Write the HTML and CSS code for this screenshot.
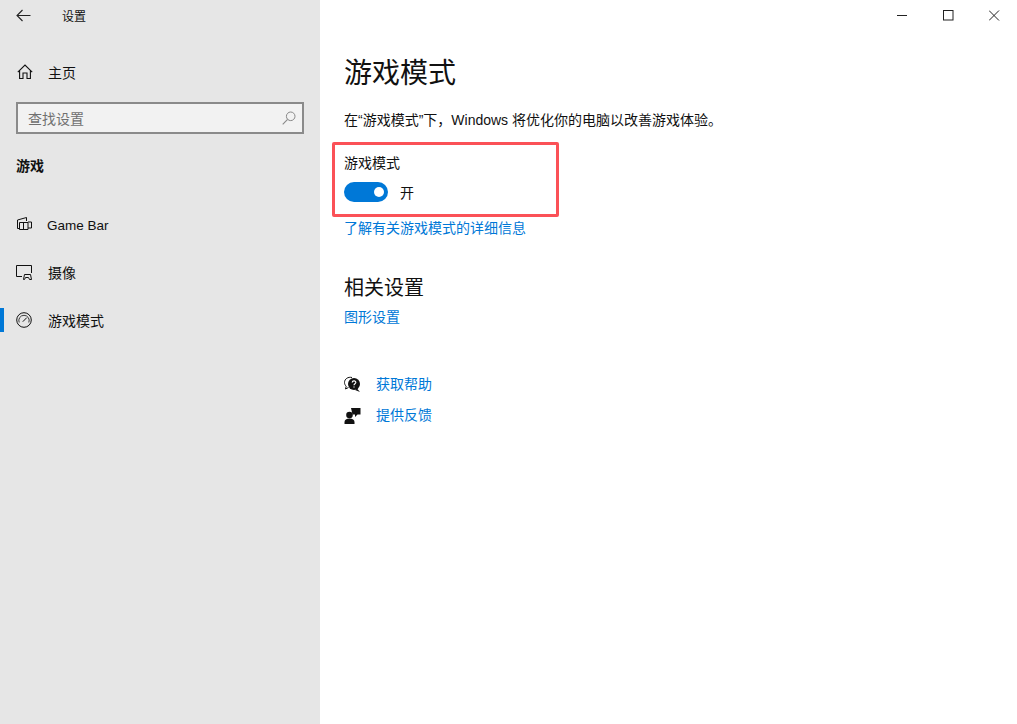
FILE: index.html
```html
<!DOCTYPE html>
<html lang="zh-CN">
<head>
<meta charset="utf-8">
<title>设置</title>
<link rel="stylesheet" href="styles.css">
</head>
<body>
<div class="app">
  <aside class="sidebar">
    <div class="titlebar">
      <svg class="back" width="16" height="14" viewBox="0 0 16 14"><path d="M6.500 1 1 6.500 6.500 12M1 6.500H14.500" fill="none" stroke="#222" stroke-width="1.100"/></svg>
      <span class="apptitle">设置</span>
    </div>
    <a class="home">
      <svg class="ico" width="16" height="16" viewBox="0 0 16 16"><path d="M.8 8.200 8 1l7.200 7.200M2.600 6.600V14.500H6V9h4v5.500h3.400V6.600" fill="none" stroke="#111" stroke-width="1.100"/></svg>
      <span>主页</span>
    </a>
    <div class="search">
      <span>查找设置</span>
      <svg width="14" height="14" viewBox="0 0 14 14"><circle cx="8.700" cy="5.300" r="4.300" fill="none" stroke="#888" stroke-width="1"/><path d="M5.600 8.400.7 13.300" stroke="#888" stroke-width="1.100"/></svg>
    </div>
    <div class="group">游戏</div>
    <nav class="nav">
      <a class="item">
        <svg class="ico" width="16" height="16" viewBox="0 0 16 16"><g fill="none" stroke="#111" stroke-width="1"><path d="M10.500 5V1.500L1.500 4v8.500h2"/><path d="M3.500 6.500h8.500v7H3.500z"/><path d="M7.500 6.500v7"/><path d="M12 6h3.500v6H12"/></g></svg>
        <span class="latin">Game Bar</span>
      </a>
      <a class="item">
        <svg class="ico" width="16" height="16" viewBox="0 0 16 16"><g fill="none" stroke="#111" stroke-width="1"><path d="M6 12.500H.5V1.500h15V9"/><path d="M2.500 3.500v.01M2.500 6v.01M2.500 8.500v.01M13.500 3.500v.01M13.500 6v.01" stroke-width="1.400"/><path d="M7.500 15.500 8.500 10.500h6l1 5h-2l-1-2h-3l-1 2z"/></g></svg>
        <span>摄像</span>
      </a>
      <a class="item current">
        <svg class="ico" width="16" height="16" viewBox="0 0 16 16"><g fill="none" stroke="#111"><circle cx="8" cy="8" r="7.300"/><path d="M3.200 10.500A5.200 5.200 0 1 1 12.800 10.500" stroke-width=".8"/><path d="M6.800 9.700 10.800 5.600"/></g></svg>
        <span>游戏模式</span>
      </a>
    </nav>
  </aside>
  <main class="content">
    <div class="winctl">
      <svg width="11" height="11" viewBox="0 0 11 11"><path d="M0 5.500h10" stroke="#222" stroke-width="1"/></svg>
      <svg width="11" height="11" viewBox="0 0 11 11"><rect x=".5" y=".5" width="9.500" height="9.500" fill="none" stroke="#222"/></svg>
      <svg width="11" height="11" viewBox="0 0 11 11"><path d="M0 .5l10 10M10 .5l-10 10" stroke="#222" stroke-width="1"/></svg>
    </div>
    <h1>游戏模式</h1>
    <p class="desc">在“游戏模式”下，Windows 将优化你的电脑以改善游戏体验。</p>
    <div class="highlight">
      <div class="label">游戏模式</div>
      <div class="toggle-row">
        <span class="toggle"><span class="knob"></span></span>
        <span>开</span>
      </div>
    </div>
    <a class="link learn">了解有关游戏模式的详细信息</a>
    <h2>相关设置</h2>
    <a class="link gfx">图形设置</a>
    <div class="help">
      <a class="help-row">
        <svg width="17" height="17" viewBox="0 0 17 17"><path d="M8 1.500C4 .500.500 3 .5 6.500c0 1.500.700 2.800 1.700 3.700L1.500 13l3-1.500" fill="none" stroke="#111"/><circle cx="10" cy="8" r="6" fill="#111"/><path d="M13 12.500l3 3.500-5-2z" fill="#111"/><path d="M8.200 6.500c.2-2.300 3.800-2 3.600 0-.1 1.300-1.800 1.300-1.800 2.800M10 10.600v1" stroke="#fff" stroke-width="1.200" fill="none"/></svg>
        <span>获取帮助</span>
      </a>
      <a class="help-row">
        <svg width="17" height="17" viewBox="0 0 17 17"><circle cx="5.500" cy="8" r="3.300" fill="#111"/><path d="M.5 17v-2c0-2 2-3.500 5-3.500s5 1.500 5 3.500v2z" fill="#111"/><path d="M7 1h9.500v6.500h-3L11 10V7.500H8.500z" fill="#111"/></svg>
        <span>提供反馈</span>
      </a>
    </div>
  </main>
</div>
</body>
</html>
```
FILE: styles.css
```css
* { box-sizing: border-box; }
html, body { margin: 0; height: 100%; overflow: hidden; }
body {
  font-family: "Liberation Sans", "Noto Sans CJK SC", sans-serif;
  font-size: 14px;
  color: #111;
  background: #fff;
}
.app { display: flex; height: 724px; }
.sidebar {
  width: 320px;
  flex: none;
  background: #e6e6e6;
  display: flex;
  flex-direction: column;
}
.titlebar {
  height: 32px;
  display: flex;
  align-items: center;
  padding-left: 16px;
}
.back { margin-right: 30px; }
.apptitle { font-size: 12px; line-height: 30px; padding-top: 2px; }
.home {
  display: flex;
  align-items: center;
  height: 48px;
  margin-top: 16px;
  padding-left: 17px;
}
.home .ico { margin-right: 15px; }
.search {
  margin: 6px 16px 0 16px;
  height: 32px;
  border: 2px solid #8a8a8a;
  background: #f2f2f2;
  display: flex;
  align-items: center;
  justify-content: space-between;
  padding: 0 6px 0 10px;
  color: #707070;
}
.group {
  margin-top: 22px;
  padding-left: 16px;
  font-weight: 700;
  line-height: 20px;
}
.nav { margin-top: 24px; display: flex; flex-direction: column; }
.item {
  position: relative;
  display: flex;
  align-items: center;
  height: 48px;
  padding-left: 16px;
}
.item .ico { margin-right: 16px; }
.item .latin {
  margin-left: -1px;
  padding-top: 2px;
  font-size: 13.500px;
}
.current::before {
  content: "";
  position: absolute;
  left: 0;
  top: 12px;
  width: 4px;
  height: 24px;
  background: #0078d7;
}
.content {
  flex: 1;
  padding-left: 24px;
  position: relative;
}
.winctl {
  position: absolute;
  top: 10px;
  right: 17px;
  display: flex;
  gap: 35px;
}
h1 {
  margin: 52px 0 0;
  font-size: 28px;
  font-weight: 400;
  line-height: 44px;
}
.desc { margin: 13px 0 0; line-height: 22px; }
.highlight {
  margin: 11px 0 0 -12px;
  width: 227px;
  height: 75px;
  border: 3px solid #fb5157;
  border-radius: 2px;
  padding: 8px 0 0 9px;
}
.label { line-height: 20px; }
.toggle-row {
  display: flex;
  align-items: center;
  gap: 12px;
  margin-top: 9px;
  height: 20px;
}
.toggle {
  width: 44px;
  height: 20px;
  border-radius: 10px;
  background: #0078d7;
  display: flex;
  align-items: center;
  justify-content: flex-end;
  padding-right: 4px;
}
.knob { width: 10px; height: 10px; border-radius: 50%; background: #fff; }
.link { display: block; color: #0078d7; line-height: 20px; }
.learn { margin-top: 1px; }
h2 {
  margin: 35px 0 0;
  font-size: 20px;
  font-weight: 400;
  line-height: 30px;
}
.gfx { margin-top: 4px; }
.help { margin-top: 47px; display: flex; flex-direction: column; gap: 11px; }
.help-row {
  display: flex;
  align-items: center;
  gap: 15px;
  color: #0078d7;
  height: 20px;
  line-height: 20px;
}
```
